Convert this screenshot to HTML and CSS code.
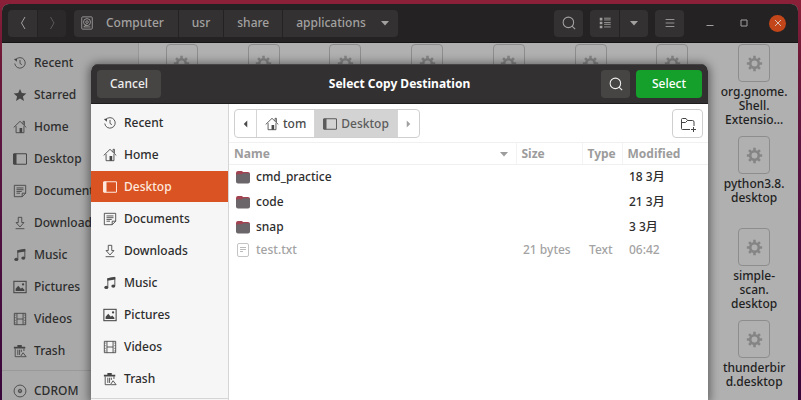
FILE: index.html
```html
<!DOCTYPE html>
<html lang="en">
<head>
    <meta charset="UTF-8">
    <meta name="viewport" content="width=device-width, initial-scale=1.0">
    <title>Select Copy Destination</title>
    <link rel="stylesheet" href="styles.css">
</head>
<body>
    <!-- shared icons -->
    <svg class="defs" width="0" height="0">
        <symbol id="i-recent" viewBox="0 0 16 16"><path d="M3.2 4.2A6 6 0 1 1 2 8.6M8 4.5v4l2.2 1.4" fill="none" stroke="currentColor"/><path d="M1 3.5l3.8-.6-.6 3.6z"/></symbol>
        <symbol id="i-star" viewBox="0 0 16 16"><path d="M8 1l2.100 4.800 5.200.4-4 3.400 1.300 5.200L8 12.100l-4.600 2.700 1.300-5.200L.7 6.200l5.200-.4z"/></symbol>
        <symbol id="i-home" viewBox="0 0 16 16"><path d="M.8 8.500L8 1.500l7.200 7M3.500 7v7.500h9V7M11.500 4.500v-3h1.500V6" fill="none" stroke="currentColor"/><path d="M7.500 9h3v5.500h-3z"/></symbol>
        <symbol id="i-desktop" viewBox="0 0 16 16"><rect x=".5" y="2" width="15" height="12" rx="1" fill="none" stroke="currentColor" stroke-width="1.200"/><path d="M1 2h3v12H1z"/></symbol>
        <symbol id="i-documents" viewBox="0 0 16 16"><path d="M1.500 1.500h13v9l-4 4h-9zM10.500 14.500v-4h4M4 4.500h8M4 6.500h8M4 8.500h6M4 10.500h4" fill="none" stroke="currentColor"/></symbol>
        <symbol id="i-downloads" viewBox="0 0 16 16"><path d="M6 1.500h4v6h2.500L8 12.500l-4.500-5H6zM3 14.500h10" fill="none" stroke="currentColor"/></symbol>
        <symbol id="i-music" viewBox="0 0 16 16"><path d="M5.500 12.500V3l8-1.500v9.500" fill="none" stroke="currentColor"/><path d="M5 2.500l9-1.500v3L5 5.500z"/><ellipse cx="3.800" cy="13" rx="2.300" ry="1.900"/><ellipse cx="11.800" cy="11.500" rx="2.300" ry="1.900"/></symbol>
        <symbol id="i-pictures" viewBox="0 0 16 16"><rect x="1" y="1.500" width="14" height="13" fill="none" stroke="currentColor" stroke-width="1.200"/><path d="M3 12.500V10l3-3.500 3 3.500 1.500-1.500 2.500 2.500v1.500z"/><circle cx="11.500" cy="5" r="1.300"/></symbol>
        <symbol id="i-videos" viewBox="0 0 16 16"><path d="M1.500 1.500h13v13h-13zM4.500 1.500v13M11.500 1.500v13M4.500 8h7" fill="none" stroke="currentColor"/><path d="M2.500 3v10M13.500 3v10" stroke="currentColor" stroke-dasharray="1 2"/></symbol>
        <symbol id="i-trash" viewBox="0 0 16 16"><path d="M1 3h13v2H1zM5 1h5v2H5z"/><path d="M2.500 5v9.500H8M12.500 5v3M5.500 6.500v6M7.500 6.500v6M9.500 6.500V9" fill="none" stroke="currentColor"/><path d="M10 14.500H8.500l3-4.500 3.500 4.500z" fill="none" stroke="currentColor"/></symbol>
        <symbol id="i-disc" viewBox="0 0 16 16"><g fill="none" stroke="currentColor"><circle cx="8" cy="8" r="6.800"/><circle cx="8" cy="8" r="2"/></g><circle cx="8" cy="8" r="1"/></symbol>
        <symbol id="i-disk" viewBox="0 0 16 16"><g fill="none" stroke="currentColor"><rect x="2" y="1" width="12" height="14" rx="1"/><circle cx="8" cy="7" r="4"/><circle cx="8" cy="7" r="1.500"/><path d="M4 12.500h8M5 12.500l2-3"/></g></symbol>
        <symbol id="i-search" viewBox="0 0 16 16"><g fill="none" stroke="currentColor" stroke-width="1.200"><circle cx="7.300" cy="7.300" r="6"/><path d="M11.500 11.500l3.500 3.500"/></g></symbol>
        <symbol id="i-gear" viewBox="0 0 20 20"><circle cx="10" cy="10" r="5" fill="none" stroke="currentColor" stroke-width="3"/><path d="M10 1v4M10 15v4M1 10h4M15 10h4M3.600 3.600l2.900 2.900M13.500 13.500l2.900 2.900M3.600 16.400l2.900-2.900M13.500 6.500l2.900-2.900" stroke="currentColor" stroke-width="3"/></symbol>
        <symbol id="i-folder" viewBox="0 0 14 14"><path d="M0 3Q0 1 2 1h4l1 1h5q2 0 2 2v6H0z" fill="#a34352"/><path d="M0 5.500q0-1.300 1.500-1.300H6l1-1h5.500Q14 3.200 14 4.500V11.500q0 2-2 2H2q-2 0-2-2z" fill="#6a6669"/></symbol>
        <symbol id="i-file" viewBox="0 0 14 14"><rect x="1.500" y=".5" width="11" height="13" rx="1.500" fill="none" stroke="#c4c4c4"/><path d="M4 4.500h6M4 6.500h6M4 8.500h3" stroke="#bbb"/></symbol>
        <symbol id="i-down" viewBox="0 0 8 8"><path d="M0 2h8L4 6.500z"/></symbol>
    </svg>

    <div class="window">
        <header class="titlebar">
            <div class="linked nav">
                <button aria-label="Back"><svg viewBox="0 0 12 16"><path d="M8 2L4.500 8 8 14" class="line"/></svg></button>
                <button aria-label="Forward" disabled><svg viewBox="0 0 12 16"><path d="M4.500 2L8 8l-3.500 6" class="line"/></svg></button>
            </div>
            <nav class="linked path">
                <button><svg><use href="#i-disk"/></svg>Computer</button>
                <button>usr</button>
                <button>share</button>
                <button>applications<svg class="arrow"><use href="#i-down"/></svg></button>
            </nav>
            <div class="tools">
                <button class="square" aria-label="Search"><svg><use href="#i-search"/></svg></button>
                <div class="linked">
                    <button class="square" aria-label="List view"><svg viewBox="0 0 16 16"><path d="M2 3.500h3M2 8h3M2 12.500h3" class="line thick"/><path d="M7 2.500h7.500M7 4.500h7.500M7 7.500h7.500M7 9.500h7.500M7 12.500h7.500" class="line"/></svg></button>
                    <button class="square" aria-label="View options"><svg class="arrow"><use href="#i-down"/></svg></button>
                </div>
                <button class="square" aria-label="Menu"><svg viewBox="0 0 16 16"><path d="M3 4h10M3 8h10M3 12h10" class="line"/></svg></button>
            </div>
            <div class="controls">
                <button aria-label="Minimize"><svg viewBox="0 0 16 16"><path d="M4.500 10.500h7" class="line"/></svg></button>
                <button aria-label="Maximize"><svg viewBox="0 0 16 16"><path d="M5 5h6v6H5z" class="line"/></svg></button>
                <button class="close" aria-label="Close"><svg viewBox="0 0 16 16"><path d="M5 5l6 6M11 5l-6 6" class="line"/></svg></button>
            </div>
        </header>

        <div class="content">
            <aside class="sidebar">
                <a href="#"><svg><use href="#i-recent"/></svg>Recent</a>
                <a href="#"><svg><use href="#i-star"/></svg>Starred</a>
                <a href="#"><svg><use href="#i-home"/></svg>Home</a>
                <a href="#"><svg><use href="#i-desktop"/></svg>Desktop</a>
                <a href="#"><svg><use href="#i-documents"/></svg>Documents</a>
                <a href="#"><svg><use href="#i-downloads"/></svg>Downloads</a>
                <a href="#"><svg><use href="#i-music"/></svg>Music</a>
                <a href="#"><svg><use href="#i-pictures"/></svg>Pictures</a>
                <a href="#"><svg><use href="#i-videos"/></svg>Videos</a>
                <a href="#"><svg><use href="#i-trash"/></svg>Trash</a>
                <hr>
                <a href="#"><svg><use href="#i-disc"/></svg>CDROM</a>
            </aside>
            <main class="files">
                <div class="file"><span class="tile"><svg><use href="#i-gear"/></svg></span></div>
                <div class="file"><span class="tile"><svg><use href="#i-gear"/></svg></span></div>
                <div class="file"><span class="tile"><svg><use href="#i-gear"/></svg></span></div>
                <div class="file"><span class="tile"><svg><use href="#i-gear"/></svg></span></div>
                <div class="file"><span class="tile"><svg><use href="#i-gear"/></svg></span></div>
                <div class="file"><span class="tile"><svg><use href="#i-gear"/></svg></span></div>
                <div class="file"><span class="tile"><svg><use href="#i-gear"/></svg></span></div>
                <div class="file last"><span class="tile"><svg><use href="#i-gear"/></svg></span>org.gnome.<br>Shell.<br>Extensio…</div>
                <div class="file last"><span class="tile"><svg><use href="#i-gear"/></svg></span>python3.8.<br>desktop</div>
                <div class="file last"><span class="tile"><svg><use href="#i-gear"/></svg></span>simple-<br>scan.<br>desktop</div>
                <div class="file last"><span class="tile"><svg><use href="#i-gear"/></svg></span>thunderbir<br>d.desktop</div>
            </main>
        </div>
    </div>

    <div class="dialog" role="dialog" aria-labelledby="dialog-title">
        <header class="dialog-header">
            <div class="start"><button class="cancel">Cancel</button></div>
            <h1 id="dialog-title">Select Copy Destination</h1>
            <div class="end">
                <button class="square" aria-label="Search"><svg><use href="#i-search"/></svg></button>
                <button class="select">Select</button>
            </div>
        </header>
        <div class="dialog-body">
            <aside class="sidebar places">
                <a href="#"><svg><use href="#i-recent"/></svg>Recent</a>
                <a href="#"><svg><use href="#i-home"/></svg>Home</a>
                <a href="#" class="active"><svg><use href="#i-desktop"/></svg>Desktop</a>
                <a href="#"><svg><use href="#i-documents"/></svg>Documents</a>
                <a href="#"><svg><use href="#i-downloads"/></svg>Downloads</a>
                <a href="#"><svg><use href="#i-music"/></svg>Music</a>
                <a href="#"><svg><use href="#i-pictures"/></svg>Pictures</a>
                <a href="#"><svg><use href="#i-videos"/></svg>Videos</a>
                <a href="#"><svg><use href="#i-trash"/></svg>Trash</a>
                <hr>
            </aside>
            <section class="browser">
                <div class="toolbar">
                    <nav class="crumbs">
                        <button aria-label="Scroll left"><svg class="arrow" viewBox="0 0 8 8"><path d="M6 0v8L2 4z"/></svg></button>
                        <button><svg><use href="#i-home"/></svg>tom</button>
                        <button class="current"><svg><use href="#i-desktop"/></svg>Desktop</button>
                        <button aria-label="Scroll right" disabled><svg class="arrow" viewBox="0 0 8 8"><path d="M2 0v8l4-4z"/></svg></button>
                    </nav>
                    <button class="new-folder" aria-label="Create folder"><svg viewBox="0 0 16 16"><path d="M10 13.500H2.500q-1 0-1-1v-9q0-1 1-1h3.500l1.500 2h5q1.500 0 1.500 1.500v4M1.500 6.500h4l2-2M13.500 11v5M11 13.500h5" class="line"/></svg></button>
                </div>
                <table>
                    <thead>
                        <tr>
                            <th class="name"><span>Name<svg class="arrow"><use href="#i-down"/></svg></span></th>
                            <th class="size">Size</th>
                            <th class="type">Type</th>
                            <th class="modified">Modified</th>
                        </tr>
                    </thead>
                    <tbody>
                        <tr><td><span><svg><use href="#i-folder"/></svg>cmd_practice</span></td><td></td><td></td><td>18 3月</td></tr>
                        <tr><td><span><svg><use href="#i-folder"/></svg>code</span></td><td></td><td></td><td>21 3月</td></tr>
                        <tr><td><span><svg><use href="#i-folder"/></svg>snap</span></td><td></td><td></td><td>3 3月</td></tr>
                        <tr class="disabled"><td><span><svg><use href="#i-file"/></svg>test.txt</span></td><td>21 bytes</td><td>Text</td><td>06:42</td></tr>
                    </tbody>
                </table>
            </section>
        </div>
    </div>
</body>
</html>
```

FILE: styles.css
```css
* {
    box-sizing: border-box;
    margin: 0;
    padding: 0;
}

body {
    font-family: 'Noto Sans', 'Noto Sans CJK SC', sans-serif;
    font-size: 12px;
    font-weight: 500;
    line-height: 16px;
    color: #2d2d2d;
    background: linear-gradient(#8c2039 0, #6d1837 60px, #5a1440 150px, #38063a 400px);
    height: 100vh;
    padding: 4px 3px 0 2px;
    overflow: hidden;
    position: relative;
}

.defs {
    position: absolute;
}

svg {
    width: 14px;
    height: 14px;
    flex: none;
    fill: currentColor;
}

.line {
    fill: none;
    stroke: currentColor;
}

.thick {
    stroke-width: 3;
}

svg.arrow {
    width: 8px;
    height: 8px;
}

button {
    font: inherit;
    color: inherit;
    background: none;
    border: none;
    display: flex;
    align-items: center;
    justify-content: center;
}

a {
    color: inherit;
    text-decoration: none;
}

/* file manager window */
.window {
    height: 100%;
    display: flex;
    flex-direction: column;
    border-radius: 7px 7px 0 0;
    overflow: hidden;
    background: #b0b0b0;
}

.titlebar {
    flex: none;
    height: 39px;
    display: flex;
    align-items: center;
    background: #242223;
    border-bottom: 1px solid #151515;
    color: #a3a1a0;
    padding: 0 12px 0 6px;
}

.titlebar button {
    height: 27px;
}

.linked {
    display: flex;
    border-radius: 4px;
    overflow: hidden;
}

.linked button,
.titlebar .square {
    background: #333132;
}

.linked button + button {
    border-left: 1px solid #242223;
}

.nav {
    margin-right: 8px;
}

.nav button {
    width: 29px;
}

.nav svg {
    width: 16px;
    height: 16px;
}

.nav button:disabled {
    color: #5b595a;
    background: #2b292a;
}

.path button {
    padding: 0 13px;
}

.path button:first-child {
    padding: 0 14px 0 6px;
    gap: 12px;
}

.path button:last-child {
    padding: 0 9px 0 13px;
    gap: 15px;
}

.tools {
    display: flex;
    gap: 7px;
    margin-left: auto;
}

.square {
    width: 29px;
    border-radius: 4px;
}

.linked .square {
    border-radius: 0;
}

.controls {
    display: flex;
    align-items: center;
    gap: 17px;
    margin-left: 17px;
}

.titlebar .controls button {
    width: 17px;
    height: 17px;
    border-radius: 50%;
}

.controls svg {
    width: 16px;
    height: 16px;
}

.titlebar .controls .close {
    background: #c24619;
    color: #d8c0b5;
}

.content {
    flex: 1;
    min-height: 0;
    display: flex;
}

.sidebar {
    flex: none;
    width: 137px;
    padding-top: 4px;
    background: #a9a9a9;
    border-right: 1px solid #989898;
}

.sidebar a {
    display: flex;
    align-items: center;
    gap: 7px;
    height: 31px;
    margin-bottom: 1px;
    padding-left: 11px;
}

.sidebar svg {
    color: #454545;
}

.sidebar hr {
    border: none;
    border-top: 1px solid #999;
    margin: 4px 0;
}

.files {
    flex: 1;
    display: grid;
    grid-template-columns: repeat(8, 1fr);
    grid-auto-rows: 92px;
    padding: 0 3px 0 2px;
}

.file {
    padding-top: 1px;
    line-height: 14px;
    text-align: center;
    color: #1f1f1f;
}

.last {
    grid-column: 8;
}

.tile {
    display: flex;
    align-items: center;
    justify-content: center;
    width: 32px;
    height: 38px;
    margin: 0 auto 3px;
    border: 1px solid #8d8d8d;
    border-radius: 4px;
    color: #858585;
}

.tile svg {
    width: 17px;
    height: 17px;
}

/* copy destination dialog */
.dialog {
    position: absolute;
    top: 64px;
    bottom: 0;
    left: 91px;
    right: 93px;
    display: flex;
    flex-direction: column;
    background: #fff;
    border-radius: 7px 7px 0 0;
    overflow: hidden;
    box-shadow: 0 1px 10px 2px rgba(0, 0, 0, 0.45);
}

.dialog-header {
    flex: none;
    height: 40px;
    display: flex;
    align-items: center;
    background: #323031;
    border-top: 1px solid #464445;
    border-bottom: 1px solid #1e1e1e;
    color: #eee;
    padding: 0 6px;
}

.dialog-header button {
    height: 28px;
    border-radius: 4px;
    background: #474544;
}

.start,
.end {
    flex: 1;
    display: flex;
    gap: 6px;
}

.end {
    justify-content: flex-end;
}

.dialog-header .cancel {
    width: 64px;
}

.dialog-header .select {
    width: 66px;
    background: #14a02b;
    color: #fff;
}

h1 {
    font-size: 12px;
    font-weight: bold;
    color: #fff;
}

.dialog-body {
    flex: 1;
    min-height: 0;
    display: flex;
}

.places {
    width: 138px;
    padding-top: 3px;
    background: #f6f6f6;
    border-right: 1px solid #d5d5d5;
}

.places hr {
    border-color: #d5d5d5;
}

.sidebar.places a {
    padding-left: 12px;
}

.sidebar .active,
.sidebar .active svg {
    background: #d95323;
    color: #ffe9df;
}

.browser {
    flex: 1;
    min-width: 0;
}

.toolbar {
    display: flex;
    justify-content: space-between;
    padding: 5px 5px 4px;
}

.crumbs,
.new-folder {
    height: 29px;
    border: 1px solid #cfcfcf;
    border-radius: 4px;
}

.new-folder {
    width: 31px;
    color: #444;
}

.new-folder svg {
    width: 16px;
    height: 16px;
}

.crumbs {
    display: flex;
    overflow: hidden;
}

.crumbs button {
    gap: 4px;
    padding: 0 8px;
    color: #4a4a4a;
}

.crumbs button + button {
    border-left: 1px solid #d5d5d5;
}

.crumbs button:first-child,
.crumbs button:last-child {
    padding: 0 7px;
}

.crumbs .arrow {
    width: 7px;
}

.crumbs .current {
    background: #d3d3d3;
    color: #5b5b5b;
}

.crumbs button:disabled {
    color: #a0a0a0;
}

table {
    width: 100%;
    table-layout: fixed;
    border-collapse: collapse;
    text-align: left;
}

th {
    height: 22px;
    padding-left: 5px;
    font-weight: bold;
    color: #9c9c9c;
    border-top: 1px solid #f0f0f0;
    border-bottom: 1px solid #f0f0f0;
}

th + th {
    border-left: 1px solid #f3f3f3;
}

th span,
td span {
    display: flex;
    align-items: center;
}

th span {
    justify-content: space-between;
    padding-right: 8px;
}

.size {
    width: 66px;
}

.type {
    width: 40px;
}

.modified {
    width: 86px;
}

td {
    height: 25px;
    padding-left: 7px;
}

td span {
    gap: 6px;
}

.disabled td {
    height: 20px;
    color: #a3a3a3;
}
```
